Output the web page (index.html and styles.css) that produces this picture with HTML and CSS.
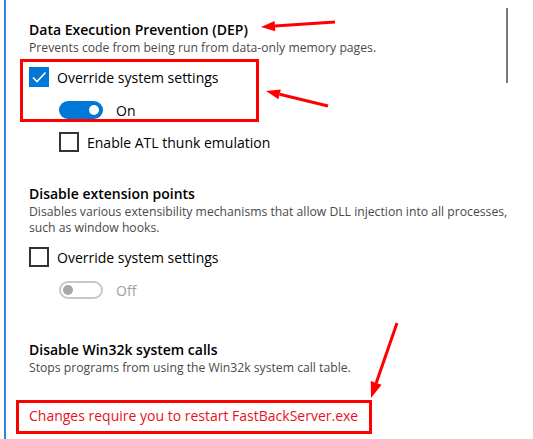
FILE: index.html
```html
<!DOCTYPE html>
<html lang="en">
<head>
    <meta charset="UTF-8">
    <meta name="viewport" content="width=device-width, initial-scale=1.0">
    <title>Exploit protection - program settings</title>
    <link rel="stylesheet" href="styles.css">
</head>
<body>

    <div class="pane">
        <div class="scrollbar"></div>

        <section class="setting">
            <h2>Data Execution Prevention (DEP)</h2>
            <p class="desc">Prevents code from being run from data-only memory pages.</p>
            <label class="check-row">
                <span class="checkbox checked">
                    <svg viewBox="0 0 20 20" width="20" height="20"><path d="M4 10.5 L8 14.5 L16.5 5.5" fill="none" stroke="#fff" stroke-width="1.6"/></svg>
                </span>
                Override system settings
            </label>
            <div class="toggle-row">
                <span class="toggle on"><span class="knob"></span></span>
                <span class="toggle-label">On</span>
            </div>
            <label class="check-row sub">
                <span class="checkbox"></span>
                Enable ATL thunk emulation
            </label>
        </section>

        <section class="setting second">
            <h2>Disable extension points</h2>
            <p class="desc">Disables various extensibility mechanisms that allow DLL injection into all processes,<br>such as window hooks.</p>
            <label class="check-row">
                <span class="checkbox"></span>
                Override system settings
            </label>
            <div class="toggle-row">
                <span class="toggle off"><span class="knob"></span></span>
                <span class="toggle-label off">Off</span>
            </div>
        </section>

        <section class="setting third">
            <h2>Disable Win32k system calls</h2>
            <p class="desc">Stops programs from using the Win32k system call table.</p>
            <p class="restart-note">Changes require you to restart FastBackServer.exe</p>
        </section>
    </div>

    <!-- red markup drawn on top of the settings -->
    <svg class="markup" width="533" height="439" viewBox="0 0 533 439">
        <g fill="none" stroke="#f00" stroke-width="3">
            <rect x="21.5" y="60.5" width="236" height="60"/>
            <rect x="17.5" y="401.5" width="353" height="31"/>
            <line x1="335" y1="22" x2="275" y2="26"/>
            <line x1="328" y1="106" x2="279.6" y2="94.3"/>
            <line x1="397" y1="323" x2="376.2" y2="383"/>
        </g>
        <g fill="#f00">
            <polygon points="261,27 275.3,31.2 274.6,20.9"/>
            <polygon points="266,91 280.8,89.4 278.4,99.2"/>
            <polygon points="371,398 381.6,384.7 370.8,381"/>
        </g>
    </svg>

</body>
</html>
```

FILE: styles.css
```css
body {
    margin: 0;
    background-color: #fff;
    font-family: 'Open Sans', 'Noto Sans', sans-serif;
    color: #000;
    overflow: hidden;
}
.pane {
    position: relative;
    margin-left: 4px;
    border-left: 2px solid #2f86dc;
    height: 439px;
    padding: 20px 0 0 23px;
    box-sizing: border-box;
}
.scrollbar {
    position: absolute;
    left: 500px;
    top: 8px;
    width: 2px;
    height: 75px;
    background-color: #7a7a7a;
}
h2 {
    margin: 0;
    font-size: 14px;
    font-weight: 600;
    line-height: 20px;
}
.desc {
    margin: 0;
    font-size: 12.2px;
    line-height: 16px;
    color: #4a4a4a;
}
.check-row {
    display: flex;
    align-items: center;
    gap: 8px;
    margin-top: 11px;
    height: 20px;
    font-size: 14px;
}
.check-row.sub {
    margin-left: 30px;
    margin-top: 13px;
}
.checkbox {
    width: 20px;
    height: 20px;
    box-sizing: border-box;
    border: 2px solid #333;
    flex-shrink: 0;
}
.checkbox.checked {
    border: none;
    background-color: #0078d7;
}
.checkbox svg {
    display: block;
}
.toggle-row {
    display: flex;
    align-items: center;
    gap: 13px;
    margin: 14px 0 0 30px;
    height: 18px;
}
.toggle {
    display: flex;
    align-items: center;
    width: 44px;
    height: 18px;
    box-sizing: border-box;
    border-radius: 9px;
    padding: 0 4px;
}
.toggle .knob {
    width: 10px;
    height: 10px;
    border-radius: 50%;
}
.toggle.on {
    background-color: #0078d7;
    justify-content: flex-end;
}
.toggle.on .knob {
    background-color: #fff;
}
.toggle.off {
    border: 2px solid #c8c8c8;
    padding: 0 2px;
}
.toggle.off .knob {
    background-color: #a6a6a6;
}
.toggle-label {
    font-size: 14px;
}
.toggle-label.off {
    color: #a0a0a0;
}
.setting.second {
    margin-top: 32px;
}
.setting.third {
    margin-top: 41px;
}
.restart-note {
    margin: 30px 0 0;
    font-size: 14px;
    line-height: 20px;
    color: #e81123;
}
.markup {
    position: absolute;
    left: 0;
    top: 0;
    pointer-events: none;
}
```
